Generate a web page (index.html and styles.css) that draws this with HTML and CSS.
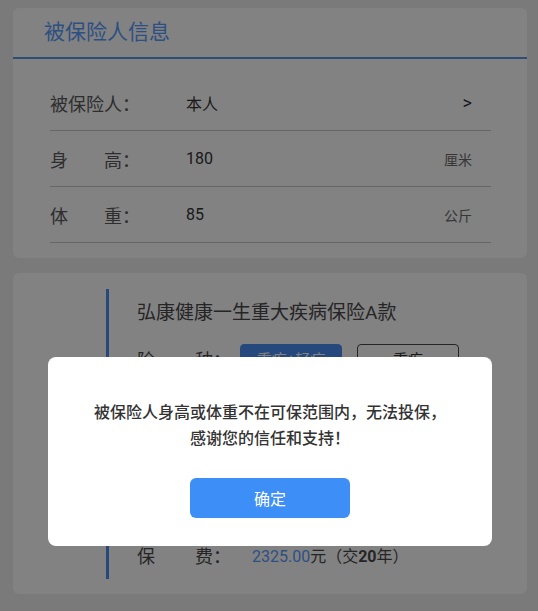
FILE: index.html
```html
<!DOCTYPE html>
<html lang="zh-CN">
<head>
    <meta charset="UTF-8">
    <meta name="viewport" content="width=device-width, initial-scale=1.0">
    <title>被保险人信息</title>
    <link rel="stylesheet" href="styles.css">
</head>
<body>
    <div class="page">
        <section class="card">
            <div class="card-head">被保险人信息</div>
            <div class="info-list">
                <div class="info-row">
                    <span class="info-label"><i>被保险人</i>：</span>
                    <span class="info-value">本人</span>
                    <span class="info-arrow">&gt;</span>
                </div>
                <div class="info-row">
                    <span class="info-label"><i>身高</i>：</span>
                    <span class="info-value">180</span>
                    <span class="info-unit">厘米</span>
                </div>
                <div class="info-row">
                    <span class="info-label"><i>体重</i>：</span>
                    <span class="info-value">85</span>
                    <span class="info-unit">公斤</span>
                </div>
            </div>
        </section>

        <section class="card card-plan">
            <div class="plan">
                <div class="plan-title">弘康健康一生重大疾病保险A款</div>
                <div class="plan-row">
                    <span class="plan-label"><i>险种</i>：</span>
                    <span class="plan-options">
                        <button class="opt opt-on">重疾+轻症</button>
                        <button class="opt">重疾</button>
                    </span>
                </div>
                <!-- 保额、保障期间等选项行，弹窗打开时被遮住 -->
                <div class="plan-more"></div>
                <div class="plan-row">
                    <span class="plan-label"><i>保费</i>：</span>
                    <span class="plan-value"><em class="price">2325.00</em>元（交<b>20</b>年）</span>
                </div>
            </div>
        </section>
    </div>

    <!-- 提示弹窗 -->
    <div class="mask">
        <div class="dialog">
            <p class="dialog-msg">被保险人身高或体重不在可保范围内，无法投保，<br>感谢您的信任和支持！</p>
            <button class="dialog-btn">确定</button>
        </div>
    </div>
</body>
</html>
```

FILE: styles.css
```css
* {
    box-sizing: border-box;
}
body {
    margin: 0;
    background-color: #efefef;
    font-family: Roboto, "Noto Sans CJK SC", sans-serif;
    color: #333;
}
i, em {
    font-style: normal;
}
.page {
    padding: 8px 11px 18px 13px;
    display: flex;
    flex-direction: column;
    gap: 15px;
}
.card {
    background-color: #fff;
    border-radius: 6px;
}

/* 被保险人信息 */
.card-head {
    height: 51px;
    padding-left: 31px;
    border-bottom: 2px solid #5a98f2;
    font-size: 21px;
    line-height: 49px;
    color: #5a9cff;
}
.info-list {
    margin: 0 36px 0 37px;
    padding: 16px 0 15px;
}
.info-row {
    display: flex;
    align-items: center;
    height: 56px;
    padding-right: 19px;
    border-bottom: 1px solid #cacaca;
}
.info-label {
    width: 136px;
    font-size: 18px;
    color: #5a5a5a;
}
.info-label i {
    display: inline-block;
    width: 72px;
    text-align: justify;
    text-align-last: justify;
}
.info-value {
    flex: 1;
    font-size: 16px;
    color: #333;
}
.info-unit {
    font-size: 14px;
    color: #6b6b6b;
}
.info-arrow {
    font-size: 18px;
    color: #333;
}

/* 产品信息 */
.card-plan {
    padding: 16px 0 15px 93px;
}
.plan {
    border-left: 3px solid #4d8ef0;
    padding: 11px 0 0 28px;
}
.plan-title {
    font-size: 19px;
    line-height: 26px;
    color: #4a4a4a;
    margin-bottom: 8px;
}
.plan-row {
    display: flex;
    align-items: center;
    height: 49px;
}
.plan-more {
    height: 147px;
}
.plan-label {
    font-size: 18px;
    color: #4a4a4a;
}
.plan-label i {
    display: inline-block;
    width: 76px;
    text-align: justify;
    text-align-last: justify;
}
.plan-options {
    display: flex;
    gap: 15px;
    margin-left: 9px;
}
.opt {
    width: 102px;
    height: 30px;
    border: 1px solid #4a4a4a;
    border-radius: 4px;
    background-color: #fff;
    font-family: inherit;
    font-size: 15px;
    color: #333;
}
.opt-on {
    background-color: #4a90f5;
    border-color: #4a90f5;
    color: #fff;
}
.plan-value {
    margin-left: 21px;
    font-size: 16px;
    color: #4a4a4a;
}
.price {
    color: #5a9cff;
}

/* 遮罩和弹窗 */
.mask {
    position: fixed;
    top: 0;
    left: 0;
    right: 0;
    bottom: 0;
    background-color: rgba(0, 0, 0, 0.49);
}
.dialog {
    position: absolute;
    top: 357px;
    left: 48px;
    width: 444px;
    height: 189px;
    padding-top: 43px;
    background-color: #fff;
    border-radius: 8px;
    text-align: center;
}
.dialog-msg {
    margin: 0;
    font-size: 16px;
    line-height: 26px;
    font-weight: 500;
    color: #333;
}
.dialog-btn {
    margin-top: 26px;
    width: 160px;
    height: 40px;
    border: none;
    border-radius: 6px;
    background-color: #3e8ef7;
    font-family: inherit;
    font-size: 16px;
    color: #fff;
}
```
